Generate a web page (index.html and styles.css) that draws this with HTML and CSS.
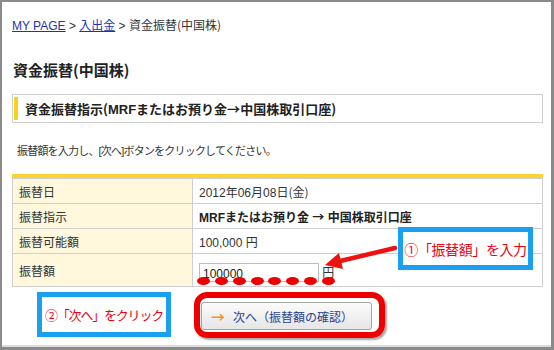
FILE: index.html
```html
<!DOCTYPE html>
<html lang="ja">
<head>
    <meta charset="UTF-8">
    <title>資金振替(中国株)</title>
    <link rel="stylesheet" href="styles.css">
</head>
<body>

<div class="frame">
    <div class="breadcrumb">
        <a href="#">MY PAGE</a> &gt; <a href="#">入出金</a> &gt; 資金振替<span class="jp">(中国株)</span>
    </div>

    <h1 class="page-title">資金振替<span class="jp">(</span>中国株<span class="jp">)</span></h1>

    <div class="section-head">
        <span>資金振替指示<span class="jp">(</span>MRFまたはお預り金<span class="jp">→</span>中国株取引口座<span class="jp">)</span></span>
    </div>

    <p class="lead">振替額を入力し、[次へ]ボタンをクリックしてください。</p>

    <div class="table-wrap">
        <table class="form-table">
            <tr>
                <th>振替日</th>
                <td>2012年06月08日<span class="jp">(金)</span></td>
            </tr>
            <tr>
                <th>振替指示</th>
                <td class="strong">MRFまたはお預り金 <span class="jp">→</span> 中国株取引口座</td>
            </tr>
            <tr>
                <th>振替可能額</th>
                <td>100,000 円</td>
            </tr>
            <tr class="amount-row">
                <th>振替額</th>
                <td>
                    <span class="amount-wrap">
                        <input type="text" class="amount-input" value="100000"> 円
                        <span class="dots">
                            <i></i><i></i><i></i><i></i><i></i><i></i><i></i><i></i>
                        </span>
                    </span>
                </td>
            </tr>
        </table>
    </div>

    <div class="actions">
        <div class="note note-click">②「次へ」をクリック</div>
        <div class="btn-ring">
            <button type="button" class="next-btn"><span class="btn-arrow">→</span>次へ（振替額の確認）</button>
        </div>
    </div>

    <!-- annotation over the table -->
    <div class="note note-input">①「振替額」を入力</div>
    <svg class="pointer" width="80" height="30" viewBox="0 0 80 30">
        <line x1="73" y1="6" x2="14" y2="20" stroke="#ee1111" stroke-width="4.5" stroke-linecap="round"/>
        <polygon points="3,23 17,11 21,27" fill="#ee1111"/>
    </svg>
</div>

</body>
</html>
```

FILE: styles.css
```css
* {
    box-sizing: border-box;
}

body {
    margin: 0;
    font-family: "Liberation Sans", "Noto Sans CJK JP", sans-serif;
    font-size: 12px;
    color: #333;
    background: #fff;
}

.jp {
    font-family: "Noto Sans CJK JP", sans-serif;
}

.frame {
    position: relative;
    width: 554px;
    height: 350px;
    border-style: solid;
    border-color: #8a8a8a;
    border-width: 2px 3px 3px 2px;
    padding: 15px 8px 0 10px;
    box-shadow: inset 0 -2px 0 #dcdcdc;
    overflow: hidden;
}

.breadcrumb {
    line-height: 16px;
    height: 16px;
    color: #333;
}

.breadcrumb a {
    color: #2233aa;
    text-decoration: underline;
}

.page-title {
    margin: 27px 0 0 1px;
    font-size: 15px;
    line-height: 20px;
    font-weight: bold;
    color: #222;
}

.section-head {
    margin-top: 13px;
    height: 29px;
    border: 1px solid #cfcfcf;
    padding: 2px 0 2px 1px;
}

.section-head > span {
    display: block;
    height: 100%;
    border-left: 4px solid #f8d21a;
    padding-left: 7px;
    font-size: 13px;
    font-weight: bold;
    line-height: 23px;
    color: #222;
}

.lead {
    margin: 20px 0 0 5px;
    font-size: 11px;
    letter-spacing: -0.8px;
    line-height: 16px;
}

.table-wrap {
    margin-top: 15px;
    border-top: 4px solid #fbd334;
}

.form-table {
    width: 100%;
    border-collapse: collapse;
}

.form-table th,
.form-table td {
    border: 1px solid #cfcfcf;
    height: 25px;
    padding: 0 6px;
    text-align: left;
    font-weight: normal;
    font-size: 12px;
    color: #333;
}

.form-table th {
    width: 180px;
    background: #fff8dc;
}

.form-table td.strong {
    font-weight: bold;
    color: #222;
}

.amount-row th,
.amount-row td {
    height: 33px;
}

.amount-wrap {
    position: relative;
    display: inline-block;
    padding-top: 4px;
}

.amount-input {
    width: 120px;
    height: 19px;
    border: 1px solid #bdbdbd;
    padding: 3px 3px 0;
    font-family: inherit;
    font-size: 12px;
    color: #222;
    vertical-align: top;
}

.dots {
    position: absolute;
    left: -2px;
    top: 18px;
    width: 138px;
    display: flex;
    justify-content: space-between;
}

.dots i {
    display: block;
    flex: none;
    width: 13px;
    height: 8px;
    border-radius: 50%;
    background: #ee0000;
}

.actions {
    display: flex;
    align-items: flex-start;
    margin-top: 5px;
}

.note {
    border: 5px solid #1aa0f0;
    background: #fff;
    color: #ee0011;
    font-family: "Noto Sans CJK JP", sans-serif;
    font-size: 14px;
    display: flex;
    align-items: center;
    justify-content: center;
}

.note-click {
    margin-left: 25px;
    width: 134px;
    height: 45px;
    font-size: 13px;
    letter-spacing: -1.2px;
}

.note-input {
    position: absolute;
    left: 396px;
    top: 225px;
    width: 135px;
    height: 43px;
    letter-spacing: -0.4px;
}

.pointer {
    position: absolute;
    left: 320px;
    top: 240px;
}

.btn-ring {
    margin-left: 23px;
    width: 191px;
    height: 46px;
    border: 6px solid #ee0000;
    border-radius: 13px;
    padding: 4px 0 0 1px;
    box-shadow: 2px 2px 2px rgba(0, 0, 0, 0.35);
}

.next-btn {
    width: 171px;
    height: 28px;
    border: 1px solid #a4a4a4;
    border-radius: 3px;
    background: linear-gradient(#fbfbfb, #e6e6e6);
    font-family: "Noto Sans CJK JP", sans-serif;
    font-size: 12px;
    color: #2d3f8f;
    text-align: left;
    padding: 0 0 0 9px;
    cursor: pointer;
}

.btn-arrow {
    color: #f7931e;
    font-size: 14px;
    font-weight: bold;
    margin-right: 8px;
}
```
